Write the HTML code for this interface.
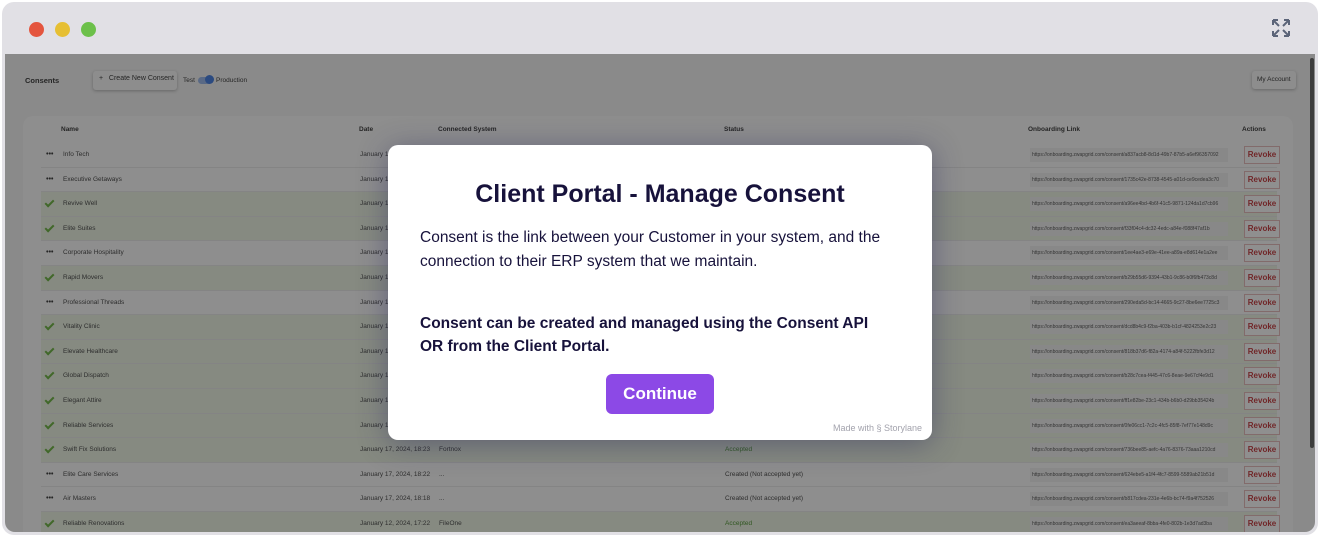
<!DOCTYPE html>
<html><head><meta charset="utf-8"><style>
*{margin:0;padding:0;box-sizing:border-box}
body{width:1320px;height:538px;background:#fff;font-family:"Liberation Sans",sans-serif;position:relative;overflow:hidden}
.frame{position:absolute;left:2px;top:2px;width:1316px;height:533px;border-radius:12px;background:#e1e0e5;overflow:hidden}
.dot{position:absolute;top:20px;width:15px;height:15px;border-radius:50%}
.content{position:absolute;left:3px;top:52px;width:1310px;height:478px;background:#f4f4f4;border-radius:0 0 10px 10px;overflow:hidden}
.ov{position:absolute;left:0;top:0;width:100%;height:100%;background:rgba(40,40,40,.52)}
.t{position:absolute;font-size:7px;color:#222;white-space:nowrap}
.card{position:absolute;left:18px;top:62px;width:1270px;height:430px;background:#fcfcfc;border-radius:10px}
.row{position:absolute;left:36px;width:1236px;height:24.6px;border-bottom:1px solid #e8e8e8}
.row.g{background:#ecf5e2}
.row span{position:absolute;top:8px;font-size:6.5px;color:#333;white-space:nowrap}
.lk{position:absolute;left:989px;top:5px;width:198px;height:14px;background:#f0f0f0;font-size:5px;color:#444;padding:4px 2px;overflow:hidden;white-space:nowrap}
.rv{position:absolute;left:1203px;top:3px;width:36px;height:18px;border:1px solid #e3b3b3;background:#fff;color:#c0262a;font-size:8px;text-align:center;line-height:16px;font-weight:bold}
.ck{position:absolute;left:6px;top:6px;width:5px;height:9px;border:solid #5cae2c;border-width:0 2px 2px 0;transform:rotate(45deg)}
.dd{position:absolute;left:5px;top:8px;font-size:7px;color:#222;font-weight:bold}
.modal{position:absolute;left:388px;top:145px;width:544px;height:295px;background:#fff;border-radius:10px;box-shadow:0 4px 30px rgba(40,40,90,.45)}
.modal h1{position:absolute;top:35px;left:0;width:100%;text-align:center;font-size:25px;color:#17123b;font-weight:bold}
.modal p{position:absolute;left:32px;font-size:15.5px;line-height:24px;color:#17123b}
.btn{position:absolute;left:218px;top:229px;width:108px;height:40px;background:#8c49e6;border-radius:6px;color:#fff;font-size:17px;text-align:center;line-height:40px;font-weight:bold}
</style></head><body>
<div class="frame">
<div class="dot" style="left:27px;background:#e4553e"></div>
<div class="dot" style="left:53px;background:#e6bf33"></div>
<div class="dot" style="left:79px;background:#6cc04a"></div>
<svg style="position:absolute;left:1269px;top:16px" width="20" height="20" viewBox="0 0 20 20" fill="none" stroke="#5b6478" stroke-width="2"><path d="M2 2l6 6M2 2h5M2 2v5M18 2l-6 6M18 2h-5M18 2v5M2 18l6-6M2 18h5M2 18v-5M18 18l-6-6M18 18h-5M18 18v-5"/></svg>
<div class="content">
<div class="t" style="left:20px;top:22px;font-weight:bold;font-size:7.5px">Consents</div>
<div style="position:absolute;left:88px;top:17px;width:84px;height:19px;background:#fafafa;border-radius:3px;box-shadow:0 1px 3px rgba(0,0,0,.3)"></div>
<div class="t" style="left:94px;top:21px;font-size:7px">+&nbsp;&nbsp; Create New Consent</div>
<div class="t" style="left:178px;top:23px;font-size:6.5px">Test</div>
<div style="position:absolute;left:193px;top:23px;width:14px;height:7px;background:#8fb0ea;border-radius:4px"></div>
<div style="position:absolute;left:200px;top:21px;width:9px;height:9px;background:#2f6fe0;border-radius:50%"></div>
<div class="t" style="left:211px;top:23px;font-size:6.5px">Production</div>
<div style="position:absolute;left:1247px;top:17px;width:44px;height:18px;background:#fafafa;border-radius:3px;box-shadow:0 1px 3px rgba(0,0,0,.3)"></div>
<div class="t" style="left:1252px;top:22px;font-size:6.5px">My Account</div>
<div class="card"></div>
<div class="t" style="left:56px;top:72px;font-weight:bold;font-size:6.5px">Name</div>
<div class="t" style="left:354px;top:72px;font-weight:bold;font-size:6.5px">Date</div>
<div class="t" style="left:433px;top:72px;font-weight:bold;font-size:6.5px">Connected System</div>
<div class="t" style="left:719px;top:72px;font-weight:bold;font-size:6.5px">Status</div>
<div class="t" style="left:1023px;top:72px;font-weight:bold;font-size:6.5px">Onboarding Link</div>
<div class="t" style="left:1237px;top:72px;font-weight:bold;font-size:6.5px">Actions</div>

<div class="row" style="top:89px"><i class="dd">•••</i><span style="left:22px">Info Tech</span><span style="left:319px">January 17, 2024, 18:23</span><div class="lk">https://onboarding.zwapgrid.com/consent/a837acb8-8d1d-49b7-87b5-a6ef96357092</div><div class="rv">Revoke</div></div>
<div class="row" style="top:113.6px"><i class="dd">•••</i><span style="left:22px">Executive Getaways</span><span style="left:319px">January 17, 2024, 18:23</span><div class="lk">https://onboarding.zwapgrid.com/consent/1735c42e-8738-4545-a01d-ce9cedea3c70</div><div class="rv">Revoke</div></div>
<div class="row g" style="top:138.2px"><i class="ck"></i><span style="left:22px">Revive Well</span><span style="left:319px">January 17, 2024, 18:23</span><div class="lk">https://onboarding.zwapgrid.com/consent/a96ee4bd-4b6f-41c5-9871-124da1d7cb96</div><div class="rv">Revoke</div></div>
<div class="row g" style="top:162.8px"><i class="ck"></i><span style="left:22px">Elite Suites</span><span style="left:319px">January 17, 2024, 18:23</span><div class="lk">https://onboarding.zwapgrid.com/consent/f33f04c4-dc32-4edc-a84e-f088f47af1b</div><div class="rv">Revoke</div></div>
<div class="row" style="top:187.4px"><i class="dd">•••</i><span style="left:22px">Corporate Hospitality</span><span style="left:319px">January 17, 2024, 18:23</span><div class="lk">https://onboarding.zwapgrid.com/consent/1ee4ae3-e69e-41ee-a89a-e8d614e1a2ee</div><div class="rv">Revoke</div></div>
<div class="row g" style="top:212px"><i class="ck"></i><span style="left:22px">Rapid Movers</span><span style="left:319px">January 17, 2024, 18:23</span><div class="lk">https://onboarding.zwapgrid.com/consent/b29b55d6-9394-43b1-9c86-b0f6fb473c8d</div><div class="rv">Revoke</div></div>
<div class="row" style="top:236.6px"><i class="dd">•••</i><span style="left:22px">Professional Threads</span><span style="left:319px">January 17, 2024, 18:23</span><div class="lk">https://onboarding.zwapgrid.com/consent/290eda5d-bc14-4665-9c27-8be6ee7725c3</div><div class="rv">Revoke</div></div>
<div class="row g" style="top:261.2px"><i class="ck"></i><span style="left:22px">Vitality Clinic</span><span style="left:319px">January 17, 2024, 18:23</span><div class="lk">https://onboarding.zwapgrid.com/consent/dcd8b4c9-f2ba-403b-b1cf-4824253e2c23</div><div class="rv">Revoke</div></div>
<div class="row g" style="top:285.8px"><i class="ck"></i><span style="left:22px">Elevate Healthcare</span><span style="left:319px">January 17, 2024, 18:23</span><div class="lk">https://onboarding.zwapgrid.com/consent/818b37d6-f82a-4174-a84f-5222fbfe3d12</div><div class="rv">Revoke</div></div>
<div class="row g" style="top:310.4px"><i class="ck"></i><span style="left:22px">Global Dispatch</span><span style="left:319px">January 17, 2024, 18:23</span><div class="lk">https://onboarding.zwapgrid.com/consent/b28c7cea-f445-47c6-8eae-9e67cf4e9d1</div><div class="rv">Revoke</div></div>
<div class="row g" style="top:335px"><i class="ck"></i><span style="left:22px">Elegant Attire</span><span style="left:319px">January 17, 2024, 18:23</span><div class="lk">https://onboarding.zwapgrid.com/consent/ff1e82be-23c1-434b-b6b0-d29bb35424b</div><div class="rv">Revoke</div></div>
<div class="row g" style="top:359.6px"><i class="ck"></i><span style="left:22px">Reliable Services</span><span style="left:319px">January 17, 2024, 18:23</span><div class="lk">https://onboarding.zwapgrid.com/consent/0fe06cc1-7c2c-4fc5-85f8-7ef77e148d9c</div><div class="rv">Revoke</div></div>
<div class="row g" style="top:384.2px"><i class="ck"></i><span style="left:22px">Swift Fix Solutions</span><span style="left:319px">January 17, 2024, 18:23</span><span style="left:398px">Fortnox</span><span style="left:684px;color:#3b8a1a">Accepted</span><div class="lk">https://onboarding.zwapgrid.com/consent/736bee85-aefc-4a76-8376-73aaa1210cd</div><div class="rv">Revoke</div></div>
<div class="row" style="top:408.8px"><i class="dd">•••</i><span style="left:22px">Elite Care Services</span><span style="left:319px">January 17, 2024, 18:22</span><span style="left:398px">...</span><span style="left:684px">Created (Not accepted yet)</span><div class="lk">https://onboarding.zwapgrid.com/consent/624ebe5-a1f4-4fc7-8599-5589ab21b51d</div><div class="rv">Revoke</div></div>
<div class="row" style="top:433.4px"><i class="dd">•••</i><span style="left:22px">Air Masters</span><span style="left:319px">January 17, 2024, 18:18</span><span style="left:398px">...</span><span style="left:684px">Created (Not accepted yet)</span><div class="lk">https://onboarding.zwapgrid.com/consent/b817cdea-231e-4e6b-bc74-f9a4f752526</div><div class="rv">Revoke</div></div>
<div class="row g" style="top:458px"><i class="ck"></i><span style="left:22px">Reliable Renovations</span><span style="left:319px">January 12, 2024, 17:22</span><span style="left:398px">FileOne</span><span style="left:684px;color:#3b8a1a">Accepted</span><div class="lk">https://onboarding.zwapgrid.com/consent/ea3aeeaf-8bba-4fe0-802b-1e3d7ad3ba</div><div class="rv">Revoke</div></div>
<div style="position:absolute;left:1305px;top:4px;width:4px;height:390px;background:#555;border-radius:2px"></div>
<div class="ov"></div>
</div>
</div>
<div class="modal">
<h1>Client Portal - Manage Consent</h1>
<p style="top:81px;width:478px">Consent is the link between your Customer in your system, and the connection to their ERP system that we maintain.</p>
<p style="top:167px;width:470px;font-weight:bold;line-height:23px">Consent can be created and managed using the Consent API OR from the Client Portal.</p>
<div class="btn">Continue</div>
<div style="position:absolute;right:10px;bottom:7px;font-size:9px;color:#a3a3ad">Made with § Storylane</div>
</div>
</body></html>
